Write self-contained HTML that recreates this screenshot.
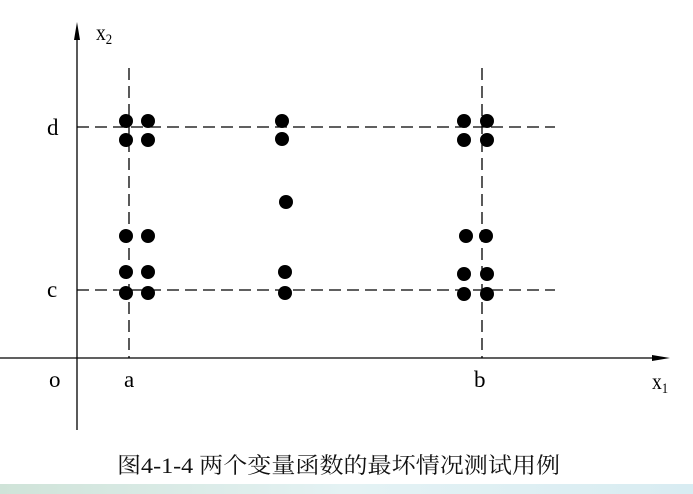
<!DOCTYPE html>
<html><head><meta charset="utf-8"><style>
html,body{margin:0;padding:0;background:#fff;width:693px;height:494px;overflow:hidden}
</style></head><body>
<svg width="693" height="494" xmlns="http://www.w3.org/2000/svg" style="display:block">
<defs><linearGradient id="g" x1="0" x2="1"><stop offset="0" stop-color="#cfe3d8"/><stop offset="0.5" stop-color="#e4f2f4"/><stop offset="1" stop-color="#d8ecf2"/></linearGradient></defs>
<rect x="0" y="484" width="693" height="10" fill="url(#g)"/>
<g stroke="#000" stroke-width="1.3" fill="none">
<line x1="77" y1="30" x2="77" y2="430"/>
<line x1="0" y1="358" x2="660" y2="358"/>
</g>
<polygon points="77,22 74,40 80,40" fill="#000"/>
<polygon points="670,358 652,355 652,361" fill="#000"/>
<g stroke="#000" stroke-width="1.3" stroke-dasharray="12,6" fill="none">
<line x1="129" y1="68" x2="129" y2="358"/>
<line x1="482" y1="68" x2="482" y2="358"/>
<line x1="77" y1="127" x2="555" y2="127"/>
<line x1="77" y1="290" x2="555" y2="290"/>
</g>
<g fill="#000">
<circle cx="126" cy="121" r="7"/><circle cx="148" cy="121" r="7"/>
<circle cx="126" cy="140" r="7"/><circle cx="148" cy="140" r="7"/>
<circle cx="282" cy="121" r="7"/><circle cx="282" cy="139" r="7"/>
<circle cx="286" cy="202" r="7"/>
<circle cx="126" cy="236" r="7"/><circle cx="148" cy="236" r="7"/>
<circle cx="126" cy="272" r="7"/><circle cx="148" cy="272" r="7"/>
<circle cx="126" cy="293" r="7"/><circle cx="148" cy="293" r="7"/>
<circle cx="285" cy="272" r="7"/><circle cx="285" cy="293" r="7"/>
<circle cx="464" cy="121" r="7"/><circle cx="487" cy="121" r="7"/>
<circle cx="464" cy="140" r="7"/><circle cx="487" cy="140" r="7"/>
<circle cx="466" cy="236" r="7"/><circle cx="486" cy="236" r="7"/>
<circle cx="464" cy="274" r="7"/><circle cx="487" cy="274" r="7"/>
<circle cx="464" cy="294" r="7"/><circle cx="487" cy="294" r="7"/>
</g>
<g font-family="Liberation Serif, serif" font-size="23" fill="#000">
<text x="96" y="40" transform="translate(96 40) scale(0.85 1) translate(-96 -40)">x<tspan font-size="15" dy="4">2</tspan></text>
<text x="47" y="135">d</text>
<text x="47" y="297">c</text>
<text x="49" y="387">o</text>
<text x="124" y="387">a</text>
<text x="474" y="387">b</text>
<text x="652" y="389" transform="translate(652 389) scale(0.85 1) translate(-652 -389)">x<tspan font-size="15" dy="4">1</tspan></text>
</g>
<text x="117" y="473" textLength="443" lengthAdjust="spacingAndGlyphs" font-family="Liberation Serif, Noto Serif CJK SC, serif" font-size="22" fill="#111">图4-1-4 两个变量函数的最坏情况测试用例</text>
</svg>
</body></html>
